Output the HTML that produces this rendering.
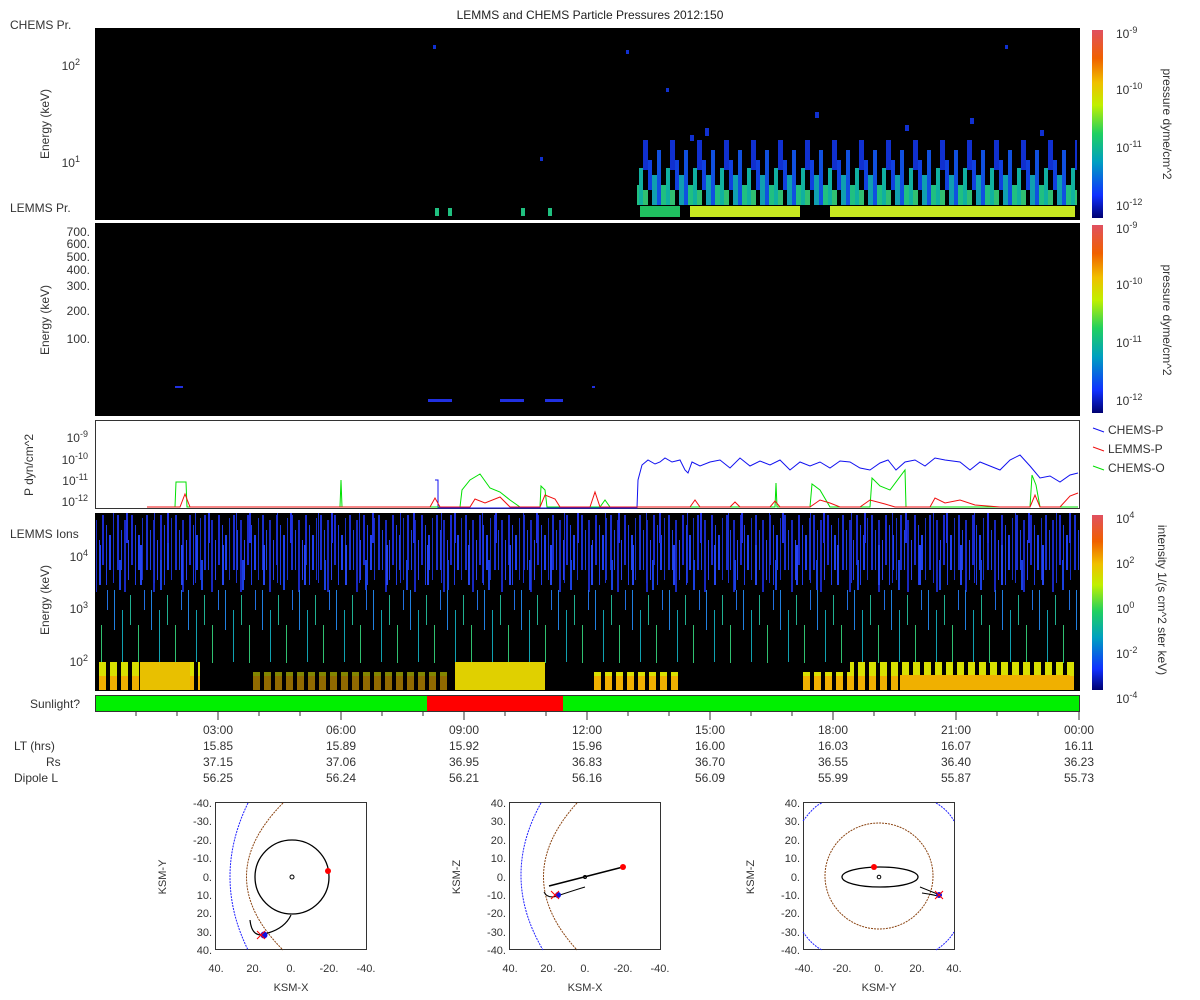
<!DOCTYPE html>
<html><head><meta charset="utf-8"><style>
html,body{margin:0;padding:0;background:#fff;}
svg{display:block;font-family:"Liberation Sans","DejaVu Sans",sans-serif;}
</style></head><body>
<svg width="1200" height="1000" viewBox="0 0 1200 1000" xmlns="http://www.w3.org/2000/svg">
<defs>
<linearGradient id="cb" x1="0" y1="1" x2="0" y2="0">
<stop offset="0" stop-color="#000070"/><stop offset="0.12" stop-color="#1030ff"/><stop offset="0.3" stop-color="#00a0c0"/><stop offset="0.45" stop-color="#20d060"/><stop offset="0.6" stop-color="#c0f000"/><stop offset="0.72" stop-color="#f0c000"/><stop offset="0.85" stop-color="#f06000"/><stop offset="1" stop-color="#e05060"/>
</linearGradient>
<pattern id="pb" width="29" height="1000" patternUnits="userSpaceOnUse">
<rect x="1" y="515" width="2" height="55" fill="#1a2fd0"/><rect x="5" y="530" width="1" height="40" fill="#2040e0"/><rect x="8" y="520" width="2" height="72" fill="#1828c0"/><rect x="12" y="540" width="1" height="40" fill="#2b40f0"/><rect x="15" y="515" width="2" height="50" fill="#1a2ad0"/><rect x="19" y="525" width="1" height="60" fill="#1e3ae8"/><rect x="22" y="535" width="2" height="35" fill="#2040f0"/><rect x="26" y="518" width="1" height="62" fill="#1830c8"/>
</pattern>
<pattern id="pb2" width="41" height="1000" patternUnits="userSpaceOnUse">
<rect x="3" y="513" width="2" height="30" fill="#2030e0"/><rect x="17" y="545" width="2" height="40" fill="#2545f0"/><rect x="31" y="513" width="1" height="70" fill="#1a30d0"/><rect x="37" y="560" width="2" height="30" fill="#1a40e0"/>
</pattern>
<pattern id="pc" width="37" height="1000" patternUnits="userSpaceOnUse">
<rect x="3" y="590" width="1" height="40" fill="#2080e0"/><rect x="11" y="610" width="1" height="52" fill="#10a0b0"/><rect x="19" y="595" width="1" height="30" fill="#20b090"/><rect x="27" y="625" width="1" height="40" fill="#30c070"/><rect x="33" y="590" width="1" height="20" fill="#2070e0"/>
</pattern>
<pattern id="py" width="11" height="1000" patternUnits="userSpaceOnUse">
<rect x="0" y="662" width="7" height="30" fill="#d8e000"/><rect x="0" y="676" width="7" height="16" fill="#f0b000"/>
</pattern>
<pattern id="p1" width="27" height="1000" patternUnits="userSpaceOnUse">
<rect x="0" y="160" width="4" height="30" fill="#1040e0"/><rect x="4" y="175" width="5" height="30" fill="#10a0b0"/><rect x="9" y="150" width="4" height="55" fill="#1050e0"/><rect x="13" y="185" width="5" height="20" fill="#20c080"/><rect x="18" y="168" width="4" height="37" fill="#10b0a0"/><rect x="22" y="140" width="5" height="30" fill="#1030d0"/><rect x="22" y="190" width="5" height="15" fill="#30c070"/>
</pattern>
</defs>

<text x="590" y="19" font-size="12" text-anchor="middle" fill="#222">LEMMS and CHEMS Particle Pressures  2012:150</text>

<!-- Panel 1 -->
<text x="10" y="29" font-size="12" fill="#333">CHEMS Pr.</text>
<text x="10" y="212" font-size="12" fill="#333">LEMMS Pr.</text>
<rect x="95" y="28" width="985" height="192" fill="#000"/>
<rect x="637" y="140" width="440" height="66" fill="url(#p1)"/>
<g fill="#1030d0"><rect x="690" y="135" width="4" height="6"/><rect x="705" y="128" width="4" height="8"/><rect x="815" y="112" width="4" height="6"/><rect x="905" y="125" width="4" height="6"/><rect x="970" y="118" width="4" height="6"/><rect x="1040" y="130" width="4" height="6"/><rect x="433" y="45" width="3" height="4"/><rect x="626" y="50" width="3" height="4"/><rect x="1005" y="45" width="3" height="4"/><rect x="666" y="88" width="3" height="4"/><rect x="540" y="157" width="3" height="4"/></g>
<rect x="690" y="206" width="385" height="11" fill="#c8e820"/>
<rect x="640" y="206" width="40" height="11" fill="#20c060"/>
<rect x="800" y="206" width="30" height="11" fill="#000"/>
<rect x="435" y="208" width="4" height="8" fill="#20c080"/><rect x="448" y="208" width="4" height="8" fill="#20c080"/><rect x="521" y="208" width="4" height="8" fill="#20c080"/><rect x="548" y="208" width="4" height="8" fill="#20c080"/>
<g font-size="12" fill="#333" text-anchor="end"><text x="80" y="70">10<tspan dy="-5" font-size="9">2</tspan></text><text x="80" y="167">10<tspan dy="-5" font-size="9">1</tspan></text></g>
<text transform="translate(49,124) rotate(-90)" font-size="12" fill="#333" text-anchor="middle">Energy (keV)</text>
<rect x="1092" y="30" width="11" height="188" fill="url(#cb)"/>
<g font-size="12" fill="#333"><text x="1116" y="38">10<tspan dy="-5" font-size="9">-9</tspan></text><text x="1116" y="94">10<tspan dy="-5" font-size="9">-10</tspan></text><text x="1116" y="152">10<tspan dy="-5" font-size="9">-11</tspan></text><text x="1116" y="210">10<tspan dy="-5" font-size="9">-12</tspan></text></g>
<text transform="translate(1163,124) rotate(90)" font-size="12" fill="#333" text-anchor="middle">pressure dyme/cm^2</text>

<!-- Panel 2 -->
<rect x="95" y="223" width="985" height="193" fill="#000"/>
<g fill="#2030e0"><rect x="428" y="399" width="24" height="3"/><rect x="500" y="399" width="24" height="3"/><rect x="545" y="399" width="18" height="3"/><rect x="175" y="386" width="8" height="2"/><rect x="592" y="386" width="3" height="2"/></g>
<g font-size="12" fill="#333" text-anchor="end"><text x="90" y="236">700.</text><text x="90" y="248">600.</text><text x="90" y="261">500.</text><text x="90" y="274">400.</text><text x="90" y="290">300.</text><text x="90" y="315">200.</text><text x="90" y="343">100.</text></g>
<text transform="translate(49,320) rotate(-90)" font-size="12" fill="#333" text-anchor="middle">Energy (keV)</text>
<rect x="1092" y="225" width="11" height="188" fill="url(#cb)"/>
<g font-size="12" fill="#333"><text x="1116" y="233">10<tspan dy="-5" font-size="9">-9</tspan></text><text x="1116" y="289">10<tspan dy="-5" font-size="9">-10</tspan></text><text x="1116" y="347">10<tspan dy="-5" font-size="9">-11</tspan></text><text x="1116" y="405">10<tspan dy="-5" font-size="9">-12</tspan></text></g>
<text transform="translate(1163,320) rotate(90)" font-size="12" fill="#333" text-anchor="middle">pressure dyme/cm^2</text>

<!-- Panel 3 -->
<rect x="95.5" y="420.5" width="984" height="88" fill="#fff" stroke="#333"/>
<polyline fill="none" stroke="#1010f0" stroke-width="1" points="435,480 438,480 438,508 637,508 638,480 642,465 648,460 655,464 660,462 665,458 672,462 680,460 685,470 688,473 692,462 700,466 710,462 720,460 730,468 740,458 750,466 760,461 770,465 780,460 790,470 800,462 810,466 820,462 830,468 840,461 850,462 860,468 870,470 880,463 888,460 896,470 905,462 915,460 925,466 935,458 945,460 960,462 970,470 980,462 990,466 1000,470 1010,460 1020,455 1030,466 1040,478 1050,476 1060,482 1070,475 1078,473"/>
<polyline fill="none" stroke="#00e000" stroke-width="1" points="147,507 175,507 176,482 186,482 187,507 340,507 341,480 342,507 460,507 462,490 470,480 480,474 490,488 500,492 510,500 520,507 540,507 541,486 545,490 547,507 600,507 605,500 610,507 775,507 776,483 777,507 810,507 812,484 820,490 830,507 870,507 872,478 880,486 890,490 905,470 906,507 1030,507 1032,475 1036,485 1040,507 1078,507"/>
<polyline fill="none" stroke="#f01010" stroke-width="1" points="147,507 180,507 185,494 190,507 430,507 435,498 440,507 470,507 475,499 485,503 500,497 510,507 540,507 545,495 555,499 560,507 590,507 595,492 600,507 690,507 695,500 700,507 730,507 735,502 740,507 770,507 775,501 780,507 810,507 820,500 830,503 840,507 860,507 870,500 885,504 895,507 930,507 935,498 945,503 960,500 975,505 1000,507 1030,507 1035,495 1040,507 1060,507 1070,496 1078,493"/>
<g font-size="12" fill="#333" text-anchor="end"><text x="88" y="442">10<tspan dy="-5" font-size="9">-9</tspan></text><text x="88" y="464">10<tspan dy="-5" font-size="9">-10</tspan></text><text x="88" y="485">10<tspan dy="-5" font-size="9">-11</tspan></text><text x="88" y="506">10<tspan dy="-5" font-size="9">-12</tspan></text></g>
<text transform="translate(33,465) rotate(-90)" font-size="12" fill="#333" text-anchor="middle">P dyn/cm^2</text>
<g font-size="12" fill="#333"><line x1="1093" y1="428" x2="1104" y2="432" stroke="#1010f0"/><text x="1108" y="434">CHEMS-P</text><line x1="1093" y1="447" x2="1104" y2="451" stroke="#f01010"/><text x="1108" y="453">LEMMS-P</text><line x1="1093" y1="466" x2="1104" y2="470" stroke="#00e000"/><text x="1108" y="472">CHEMS-O</text></g>

<!-- Panel 4 -->
<rect x="95" y="513" width="985" height="178" fill="#000"/>
<rect x="96" y="513" width="983" height="90" fill="url(#pb)"/>
<rect x="96" y="513" width="983" height="90" fill="url(#pb2)"/>
<rect x="96" y="588" width="983" height="75" fill="url(#pc)"/>
<rect x="96" y="662" width="104" height="28" fill="url(#py)"/>
<rect x="140" y="662" width="50" height="28" fill="#e8c000"/>
<rect x="455" y="662" width="90" height="28" fill="#e0d000"/>
<rect x="590" y="672" width="90" height="18" fill="url(#py)"/>
<rect x="800" y="672" width="60" height="18" fill="url(#py)"/>
<rect x="850" y="662" width="228" height="28" fill="url(#py)"/>
<rect x="900" y="675" width="170" height="15" fill="#f0b000"/>
<rect x="250" y="672" width="200" height="18" fill="url(#py)" opacity="0.6"/>
<g font-size="12" fill="#333" text-anchor="end"><text x="88" y="561">10<tspan dy="-5" font-size="9">4</tspan></text><text x="88" y="613">10<tspan dy="-5" font-size="9">3</tspan></text><text x="88" y="666">10<tspan dy="-5" font-size="9">2</tspan></text></g>
<text x="10" y="538" font-size="12" fill="#333">LEMMS Ions</text>
<text transform="translate(49,600) rotate(-90)" font-size="12" fill="#333" text-anchor="middle">Energy (keV)</text>
<rect x="1092" y="515" width="11" height="175" fill="url(#cb)"/>
<g font-size="12" fill="#333"><text x="1116" y="523">10<tspan dy="-5" font-size="9">4</tspan></text><text x="1116" y="568">10<tspan dy="-5" font-size="9">2</tspan></text><text x="1116" y="613">10<tspan dy="-5" font-size="9">0</tspan></text><text x="1116" y="658">10<tspan dy="-5" font-size="9">-2</tspan></text><text x="1116" y="703">10<tspan dy="-5" font-size="9">-4</tspan></text></g>
<text transform="translate(1158,600) rotate(90)" font-size="12" fill="#333" text-anchor="middle">intensity 1/(s cm^2 ster keV)</text>

<!-- Sunlight -->
<text x="80" y="708" font-size="12" fill="#333" text-anchor="end">Sunlight?</text>
<rect x="95.5" y="695.5" width="984" height="16" fill="#00f000" stroke="#333"/>
<rect x="427" y="696" width="136" height="15" fill="#ff0000"/>
<g stroke="#333"><line x1="136" y1="712" x2="136" y2="716"/><line x1="177" y1="712" x2="177" y2="716"/><line x1="218" y1="712" x2="218" y2="720"/><line x1="259" y1="712" x2="259" y2="716"/><line x1="300" y1="712" x2="300" y2="716"/><line x1="341" y1="712" x2="341" y2="720"/><line x1="382" y1="712" x2="382" y2="716"/><line x1="423" y1="712" x2="423" y2="716"/><line x1="464" y1="712" x2="464" y2="720"/><line x1="505" y1="712" x2="505" y2="716"/><line x1="546" y1="712" x2="546" y2="716"/><line x1="587" y1="712" x2="587" y2="720"/><line x1="628" y1="712" x2="628" y2="716"/><line x1="669" y1="712" x2="669" y2="716"/><line x1="710" y1="712" x2="710" y2="720"/><line x1="751" y1="712" x2="751" y2="716"/><line x1="792" y1="712" x2="792" y2="716"/><line x1="833" y1="712" x2="833" y2="720"/><line x1="874" y1="712" x2="874" y2="716"/><line x1="915" y1="712" x2="915" y2="716"/><line x1="956" y1="712" x2="956" y2="720"/><line x1="997" y1="712" x2="997" y2="716"/><line x1="1038" y1="712" x2="1038" y2="716"/><line x1="1079" y1="712" x2="1079" y2="720"/></g>
<g font-size="12" fill="#333" text-anchor="middle">
<text x="218" y="734">03:00</text><text x="341" y="734">06:00</text><text x="464" y="734">09:00</text><text x="587" y="734">12:00</text><text x="710" y="734">15:00</text><text x="833" y="734">18:00</text><text x="956" y="734">21:00</text><text x="1079" y="734">00:00</text>
<text x="218" y="750">15.85</text><text x="341" y="750">15.89</text><text x="464" y="750">15.92</text><text x="587" y="750">15.96</text><text x="710" y="750">16.00</text><text x="833" y="750">16.03</text><text x="956" y="750">16.07</text><text x="1079" y="750">16.11</text>
<text x="218" y="766">37.15</text><text x="341" y="766">37.06</text><text x="464" y="766">36.95</text><text x="587" y="766">36.83</text><text x="710" y="766">36.70</text><text x="833" y="766">36.55</text><text x="956" y="766">36.40</text><text x="1079" y="766">36.23</text>
<text x="218" y="782">56.25</text><text x="341" y="782">56.24</text><text x="464" y="782">56.21</text><text x="587" y="782">56.16</text><text x="710" y="782">56.09</text><text x="833" y="782">55.99</text><text x="956" y="782">55.87</text><text x="1079" y="782">55.73</text>
</g>
<g font-size="12" fill="#333"><text x="14" y="750">LT (hrs)</text><text x="46" y="766">Rs</text><text x="14" y="782">Dipole L</text></g>

<!-- Orbit plot 1 -->
<g font-size="11" fill="#333">
<rect x="215.5" y="802.5" width="151" height="147" fill="#fff" stroke="#333"/>
<path d="M248,803 Q212,877 248,950" fill="none" stroke="#2020ff" stroke-dasharray="2,1"/>
<path d="M283,803 Q210,877 283,950" fill="none" stroke="#8b4513" stroke-dasharray="2,1"/>
<circle cx="292" cy="877" r="37" fill="none" stroke="#000" stroke-width="1.3"/>
<circle cx="292" cy="877" r="2" fill="none" stroke="#000"/>
<path d="M250,920 Q252,940 268,933 Q285,928 291,915" fill="none" stroke="#000" stroke-width="1.2"/>
<circle cx="328" cy="871" r="3" fill="#f00"/>
<circle cx="264" cy="935" r="3.5" fill="#1010e0"/>
<path d="M257,931 l8,8 M265,931 l-8,8" stroke="#f00"/>
<g text-anchor="end"><text x="212" y="807">-40.</text><text x="212" y="825">-30.</text><text x="212" y="844">-20.</text><text x="212" y="862">-10.</text><text x="212" y="881">0.</text><text x="212" y="899">10.</text><text x="212" y="917">20.</text><text x="212" y="936">30.</text><text x="212" y="954">40.</text></g>
<g text-anchor="middle"><text x="216" y="972">40.</text><text x="254" y="972">20.</text><text x="291" y="972">0.</text><text x="329" y="972">-20.</text><text x="366" y="972">-40.</text><text x="291" y="991">KSM-X</text></g>
<text transform="translate(166,877) rotate(-90)" text-anchor="middle">KSM-Y</text>
</g>

<!-- Orbit plot 2 -->
<g font-size="11" fill="#333">
<rect x="509.5" y="802.5" width="151" height="147" fill="#fff" stroke="#333"/>
<path d="M541,803 Q500,877 543,950" fill="none" stroke="#2020ff" stroke-dasharray="2,1"/>
<path d="M577,803 Q510,877 577,950" fill="none" stroke="#8b4513" stroke-dasharray="2,1"/>
<line x1="549" y1="886" x2="623" y2="867" stroke="#000" stroke-width="1.5"/>
<circle cx="585" cy="877" r="1.5" fill="none" stroke="#000"/>
<path d="M544,892 Q548,900 560,895 Q575,890 585,887" fill="none" stroke="#000"/>
<circle cx="623" cy="867" r="3" fill="#f00"/>
<circle cx="558" cy="895" r="3" fill="#1010e0"/>
<path d="M551,891 l8,8 M559,891 l-8,8" stroke="#f00"/>
<g text-anchor="end"><text x="506" y="807">40.</text><text x="506" y="825">30.</text><text x="506" y="844">20.</text><text x="506" y="862">10.</text><text x="506" y="881">0.</text><text x="506" y="899">-10.</text><text x="506" y="917">-20.</text><text x="506" y="936">-30.</text><text x="506" y="954">-40.</text></g>
<g text-anchor="middle"><text x="510" y="972">40.</text><text x="548" y="972">20.</text><text x="585" y="972">0.</text><text x="623" y="972">-20.</text><text x="660" y="972">-40.</text><text x="585" y="991">KSM-X</text></g>
<text transform="translate(460,877) rotate(-90)" text-anchor="middle">KSM-Z</text>
</g>

<!-- Orbit plot 3 -->
<g font-size="11" fill="#333">
<rect x="803.5" y="802.5" width="151" height="147" fill="#fff" stroke="#333"/>
<path d="M803,821 Q815,805 822,803 M936,803 Q948,810 954,821 M803,932 Q812,945 822,950 M936,950 Q948,942 954,932" fill="none" stroke="#2020ff" stroke-dasharray="2,1"/>
<ellipse cx="879" cy="876" rx="54" ry="53" fill="none" stroke="#8b4513" stroke-dasharray="2,1"/>
<ellipse cx="880" cy="877" rx="38" ry="10" fill="none" stroke="#000" stroke-width="1.3"/>
<circle cx="879" cy="877" r="1.8" fill="none" stroke="#000"/>
<path d="M920,887 L940,895 M922,893 Q930,894 938,896" fill="none" stroke="#000"/>
<circle cx="874" cy="867" r="3" fill="#f00"/>
<circle cx="939" cy="895" r="3" fill="#1010e0"/>
<path d="M935,891 l8,8 M943,891 l-8,8" stroke="#f00"/>
<g text-anchor="end"><text x="800" y="807">40.</text><text x="800" y="825">30.</text><text x="800" y="844">20.</text><text x="800" y="862">10.</text><text x="800" y="881">0.</text><text x="800" y="899">-10.</text><text x="800" y="917">-20.</text><text x="800" y="936">-30.</text><text x="800" y="954">-40.</text></g>
<g text-anchor="middle"><text x="804" y="972">-40.</text><text x="842" y="972">-20.</text><text x="879" y="972">0.</text><text x="917" y="972">20.</text><text x="954" y="972">40.</text><text x="879" y="991">KSM-Y</text></g>
<text transform="translate(754,877) rotate(-90)" text-anchor="middle">KSM-Z</text>
</g>
</svg>
</body></html>
